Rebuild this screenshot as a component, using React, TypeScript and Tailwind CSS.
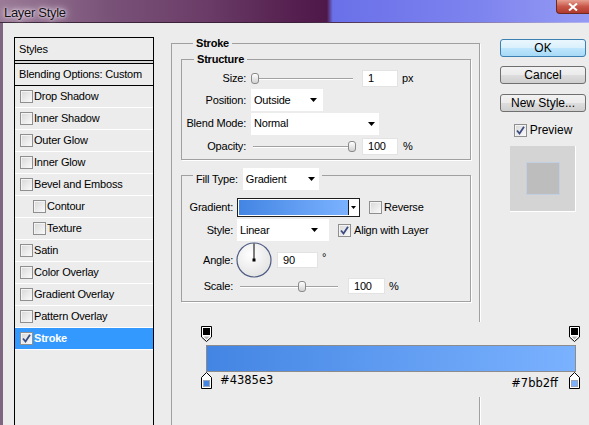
import React from "react";

type Row = { name: string; indent?: boolean; selected?: boolean };

const styleRows: Row[] = [
  { name: "Drop Shadow" },
  { name: "Inner Shadow" },
  { name: "Outer Glow" },
  { name: "Inner Glow" },
  { name: "Bevel and Emboss" },
  { name: "Contour", indent: true },
  { name: "Texture", indent: true },
  { name: "Satin" },
  { name: "Color Overlay" },
  { name: "Gradient Overlay" },
  { name: "Pattern Overlay" },
  { name: "Stroke", selected: true },
];

function Check({ checked = false }: { checked?: boolean }) {
  return (
    <span className="flex h-[13px] w-[13px] shrink-0 items-center justify-center border border-[#8f8f8f] bg-linear-to-br from-[#d8d8d8] to-[#fafafa] shadow-[inset_1px_1px_0_#f4f4f4]">
      {checked && (
        <svg width="9" height="9" viewBox="0 0 9 9">
          <path d="M1 4.5 L3.5 7.5 L8 0.8" fill="none" stroke="#3b4c82" strokeWidth="1.8" />
        </svg>
      )}
    </span>
  );
}

function Arrow() {
  return (
    <svg width="7" height="4" viewBox="0 0 7 4" className="shrink-0">
      <path d="M0 0H7L3.5 4Z" fill="#000" />
    </svg>
  );
}

function Select({ value, w, pr = "pr-[5px]" }: { value: string; w: string; pr?: string }) {
  return (
    <div className={`flex h-[22px] items-center justify-between bg-white pl-[3px] ${pr} ${w}`}>
      <span>{value}</span>
      <Arrow />
    </div>
  );
}

function Field({ value, w, h = "h-[17px]" }: { value: string; w: string; h?: string }) {
  return (
    <div className={`flex items-center border border-[#e3e3e3] bg-white pl-[5px] ${w} ${h}`}>
      {value}
    </div>
  );
}

function Slider({ w, pos }: { w: string; pos: number }) {
  return (
    <div className={`relative h-[11px] ${w}`}>
      <div className="absolute left-0 right-0 top-[5px] h-[2px] border-t border-[#a2a2a2] bg-white" />
      <div
        className="absolute top-0 h-[11px] w-[8px] rounded-[3px] border border-[#8a8a8a] bg-linear-to-b from-white to-[#d2d2d2]"
        style={{ left: `calc(${pos * 100}% - 4px)` }}
      />
    </div>
  );
}

function Button({ label, primary = false, className = "" }: { label: string; primary?: boolean; className?: string }) {
  const skin = primary
    ? "border-[#3c7fb1] bg-[linear-gradient(#eaf6fd_0%,#d9f0fc_50%,#bee6fd_51%,#a7d9f5_100%)]"
    : "border-[#707070] bg-[linear-gradient(#f2f2f2_0%,#ebebeb_50%,#dddddd_51%,#cfcfcf_100%)]";
  return (
    <div className={`flex h-[18px] w-[86px] items-center justify-center rounded-[3px] border ${skin} ${className}`}>
      {label}
    </div>
  );
}

function TopStop() {
  return (
    <svg width="11" height="16" viewBox="0 0 11 16">
      <path d="M0.5 0.5H10.5V11L5.5 15.5L0.5 11Z" fill="#fff" stroke="#000" />
      <rect x="2" y="2" width="7" height="7" fill="#000" />
      <path d="M2.5 10.5H8.5L5.5 13.5Z" fill="#b5b5b5" />
    </svg>
  );
}

function BottomStop({ color }: { color: string }) {
  return (
    <svg width="11" height="17" viewBox="0 0 11 17">
      <path d="M5.5 0.5L10.5 5.5V16.5H0.5V5.5Z" fill="#fff" stroke="#000" />
      <rect x="2.5" y="8.5" width="6" height="6" fill={color} stroke="#9aa6b8" />
    </svg>
  );
}

function AngleDial() {
  return (
    <svg width="36" height="36" viewBox="0 0 36 36" className="shrink-0">
      <defs>
        <radialGradient id="dialFace" cx="0.4" cy="0.35" r="0.7">
          <stop offset="0" stopColor="#ffffff" />
          <stop offset="1" stopColor="#e2e2e2" />
        </radialGradient>
      </defs>
      <circle cx="18" cy="18" r="17" fill="url(#dialFace)" stroke="#4e5c83" strokeWidth="1.2" />
      <line x1="18" y1="18" x2="18" y2="1.5" stroke="#000" strokeWidth="1" />
      <rect x="16.5" y="16.5" width="3" height="3" fill="#000" />
    </svg>
  );
}

export default function App() {
  return (
    <div className="h-[425px] w-[589px] overflow-hidden bg-[#ececec] font-['Liberation_Sans',Arial,sans-serif] text-[11px] tracking-[-0.2px] text-black">
      {/* title bar */}
      <div className="flex h-[22px] items-start bg-[linear-gradient(90deg,#9a7a97_0%,#7a5379_18%,#6a3c67_35%,#55204f_50%,#4e1948_55.5%,#6a70e8_56.5%,#7c82ee_80%,#959bf3_100%)]">
        <span className="ml-[4px] mt-[3px] text-[13px] tracking-[-0.3px] text-[#120e12] [text-shadow:0_0_10px_rgba(255,235,255,1),0_0_5px_rgba(255,240,255,0.9),0_0_2px_rgba(255,255,255,0.8)]">
          Layer Style
        </span>
        <div className="ml-auto flex h-[14px] w-[33px] items-center justify-center rounded-bl-[4px] border-b border-l border-[#6b2a22] bg-linear-to-b from-[#e6a091] via-[#c8574a] to-[#b0392c]">
          <svg width="10" height="8" viewBox="0 0 10 8">
            <path d="M1 0.5L9 7.5M9 0.5L1 7.5" stroke="#fff" strokeWidth="2" />
          </svg>
        </div>
      </div>
      <div className="h-px bg-linear-to-r from-[#3a2839] via-[#3c1e3a] to-[#b4b8f6]" />

      <div className="flex border-l-[3px] border-[#7f6680] pl-[11px] pt-[14px]">
        {/* styles list */}
        <div className="h-[400px] w-[140px] shrink-0 border border-black">
          <div className="flex h-[22px] items-center pl-[4px]">Styles</div>
          <div className="h-[4px] border-y border-black bg-[#d6d6d6]" />
          <div className="flex h-[22px] items-center border-b border-black pl-[4px]">Blending Options: Custom</div>
          {styleRows.map((row) => (
            <div
              key={row.name}
              className={`flex h-[22px] items-center gap-[1px] border-b border-white ${row.indent ? "pl-[18px]" : "pl-[5px]"} ${
                row.selected ? "bg-[#3399ff] font-bold text-white" : ""
              }`}
            >
              <Check checked={row.selected} />
              <span>{row.name}</span>
            </div>
          ))}
        </div>

        {/* stroke settings */}
        <fieldset className="ml-[17px] h-[400px] w-[309px] shrink-0 border border-[#a0a0a0] pl-[9px] pr-[8px] pt-[3px] shadow-[1px_1px_0_#fff]">
          <legend className="ml-[12px] px-[3px] font-bold leading-[13px]">Stroke</legend>

          <fieldset className="border border-[#a0a0a0] pb-[3px] pt-[1px] shadow-[1px_1px_0_#fff]">
            <legend className="ml-[12px] px-[3px] font-bold leading-[13px]">Structure</legend>
            <div className="flex h-[22px] items-center">
              <span className="w-[64px] text-right">Size:</span>
              <div className="ml-[7px]">
                <Slider w="w-[100px]" pos={0.02} />
              </div>
              <div className="ml-[9px]">
                <Field value="1" w="w-[36px]" />
              </div>
              <span className="ml-[4px]">px</span>
            </div>
            <div className="flex h-[22px] items-center">
              <span className="w-[64px] text-right">Position:</span>
              <div className="ml-[5px]">
                <Select value="Outside" w="w-[72px]" pr="pr-[6px]" />
              </div>
            </div>
            <div className="flex h-[25px] items-center">
              <span className="w-[64px] text-right">Blend Mode:</span>
              <div className="ml-[5px]">
                <Select value="Normal" w="w-[128px]" pr="pr-[4px]" />
              </div>
            </div>
            <div className="flex h-[20px] items-center">
              <span className="w-[64px] text-right">Opacity:</span>
              <div className="ml-[7px]">
                <Slider w="w-[100px]" pos={0.99} />
              </div>
              <div className="ml-[9px]">
                <Field value="100" w="w-[36px]" />
              </div>
              <span className="ml-[5px]">%</span>
            </div>
          </fieldset>

          <fieldset className="border border-[#a0a0a0] pb-[7px] pt-[6px] shadow-[1px_1px_0_#fff]">
            <legend className="ml-[11px] px-[3px] pt-[8px]">
              <div className="flex items-center">
                <span className="mr-[5px]">Fill Type:</span>
                <Select value="Gradient" w="w-[76px]" pr="pr-[4px]" />
              </div>
            </legend>
            <div className="flex h-[22px] items-center">
              <span className="w-[51px] text-right">Gradient:</span>
              <div className="ml-[4px] flex h-[19px] w-[123px] border border-[#1e1e1e] bg-white p-px">
                <div className="flex-1 bg-linear-to-r from-[#4385e3] to-[#7bb2ff]" />
                <div className="flex w-[10px] items-center justify-center border-l border-[#1e1e1e]">
                  <svg width="5" height="3" viewBox="0 0 5 3">
                    <path d="M0 0H5L2.5 3Z" fill="#000" />
                  </svg>
                </div>
              </div>
              <div className="ml-[9px]">
                <Check />
              </div>
              <span className="ml-[2px]">Reverse</span>
            </div>
            <div className="flex h-[24px] items-center">
              <span className="w-[51px] text-right">Style:</span>
              <div className="ml-[4px]">
                <Select value="Linear" w="w-[92px]" pr="pr-[11px]" />
              </div>
              <div className="ml-[9px]">
                <Check checked />
              </div>
              <span className="ml-[3px]">Align with Layer</span>
            </div>
            <div className="flex h-[36px] items-center">
              <span className="w-[51px] text-right">Angle:</span>
              <div className="ml-[3px]">
                <AngleDial />
              </div>
              <div className="ml-[5px]">
                <Field value="90" w="w-[41px]" h="h-[16px]" />
              </div>
              <span className="mb-[6px] ml-[4px] self-center">°</span>
            </div>
            <div className="flex h-[16px] items-center">
              <span className="w-[51px] text-right">Scale:</span>
              <div className="ml-[7px]">
                <Slider w="w-[98px]" pos={0.63} />
              </div>
              <div className="ml-[10px]">
                <Field value="100" w="w-[37px]" h="h-[16px]" />
              </div>
              <span className="ml-[4px]">%</span>
            </div>
          </fieldset>

          {/* gradient editor strip */}
          <div className="-mr-[120px] mt-[20px] bg-[#ececec] pb-[7px] pl-[20px] pt-[4px]">
            <div className="flex w-[379px] justify-between">
              <TopStop />
              <TopStop />
            </div>
            <div className="ml-[5px] mt-[3px] h-[27px] w-[370px] border border-[#8c8c8c] bg-linear-to-r from-[#4385e3] to-[#7bb2ff]" />
            <div className="flex w-[379px] items-start justify-between font-['DejaVu_Sans',Verdana,sans-serif] text-[11.5px] tracking-normal text-black">
              <div className="flex items-start">
                <BottomStop color="#4385e3" />
                <span className="ml-[8px] mt-[2px] leading-[13px]">#4385e3</span>
              </div>
              <div className="flex items-start">
                <span className="mr-[11px] mt-[5px] leading-[13px]">#7bb2ff</span>
                <BottomStop color="#7bb2ff" />
              </div>
            </div>
          </div>
        </fieldset>

        {/* dialog buttons */}
        <div className="ml-[20px] mt-[2px] flex w-[86px] shrink-0 flex-col items-center text-[12px] tracking-normal">
          <Button label="OK" primary />
          <Button label="Cancel" className="mt-[9px]" />
          <Button label="New Style..." className="mt-[10px]" />
          <div className="mt-[9px] flex items-center gap-[3px]">
            <Check checked />
            <span>Preview</span>
          </div>
          <div className="mt-[7px] flex h-[66px] w-[66px] items-center justify-center border-b border-r border-white bg-[#d4d4d4]">
            <div className="h-[33px] w-[34px] border border-[#c2cfe2] bg-[#bdbdbd]" />
          </div>
        </div>
      </div>
    </div>
  );
}
